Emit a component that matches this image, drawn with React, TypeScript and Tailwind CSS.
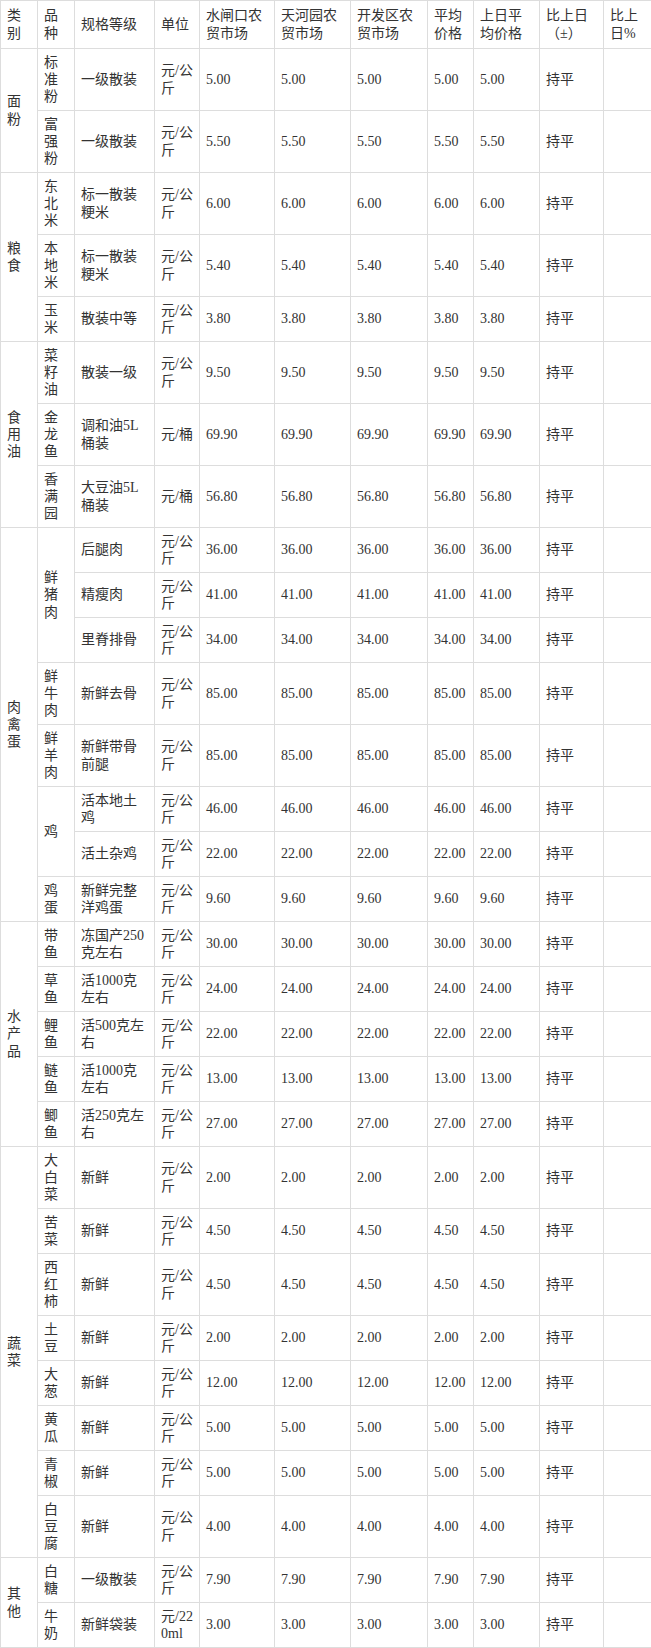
type Row = {
  cat?: [string, number];
  kind?: [string, number];
  spec: string;
  unit: string;
  price: string;
  tall?: boolean;
};

const rows: Row[] = [
  { cat: ["面粉", 2], kind: ["标准粉", 1], spec: "一级散装", unit: "元/公斤", price: "5.00", tall: true },
  { kind: ["富强粉", 1], spec: "一级散装", unit: "元/公斤", price: "5.50", tall: true },
  { cat: ["粮食", 3], kind: ["东北米", 1], spec: "标一散装粳米", unit: "元/公斤", price: "6.00", tall: true },
  { kind: ["本地米", 1], spec: "标一散装粳米", unit: "元/公斤", price: "5.40", tall: true },
  { kind: ["玉米", 1], spec: "散装中等", unit: "元/公斤", price: "3.80" },
  { cat: ["食用油", 3], kind: ["菜籽油", 1], spec: "散装一级", unit: "元/公斤", price: "9.50", tall: true },
  { kind: ["金龙鱼", 1], spec: "调和油5L桶装", unit: "元/桶", price: "69.90", tall: true },
  { kind: ["香满园", 1], spec: "大豆油5L桶装", unit: "元/桶", price: "56.80", tall: true },
  { cat: ["肉禽蛋", 8], kind: ["鲜猪肉", 3], spec: "后腿肉", unit: "元/公斤", price: "36.00" },
  { spec: "精瘦肉", unit: "元/公斤", price: "41.00" },
  { spec: "里脊排骨", unit: "元/公斤", price: "34.00" },
  { kind: ["鲜牛肉", 1], spec: "新鲜去骨", unit: "元/公斤", price: "85.00", tall: true },
  { kind: ["鲜羊肉", 1], spec: "新鲜带骨前腿", unit: "元/公斤", price: "85.00", tall: true },
  { kind: ["鸡", 2], spec: "活本地土鸡", unit: "元/公斤", price: "46.00" },
  { spec: "活土杂鸡", unit: "元/公斤", price: "22.00" },
  { kind: ["鸡蛋", 1], spec: "新鲜完整洋鸡蛋", unit: "元/公斤", price: "9.60" },
  { cat: ["水产品", 5], kind: ["带鱼", 1], spec: "冻国产250克左右", unit: "元/公斤", price: "30.00" },
  { kind: ["草鱼", 1], spec: "活1000克左右", unit: "元/公斤", price: "24.00" },
  { kind: ["鲤鱼", 1], spec: "活500克左右", unit: "元/公斤", price: "22.00" },
  { kind: ["鲢鱼", 1], spec: "活1000克左右", unit: "元/公斤", price: "13.00" },
  { kind: ["鲫鱼", 1], spec: "活250克左右", unit: "元/公斤", price: "27.00" },
  { cat: ["蔬菜", 8], kind: ["大白菜", 1], spec: "新鲜", unit: "元/公斤", price: "2.00", tall: true },
  { kind: ["苦菜", 1], spec: "新鲜", unit: "元/公斤", price: "4.50" },
  { kind: ["西红柿", 1], spec: "新鲜", unit: "元/公斤", price: "4.50", tall: true },
  { kind: ["土豆", 1], spec: "新鲜", unit: "元/公斤", price: "2.00" },
  { kind: ["大葱", 1], spec: "新鲜", unit: "元/公斤", price: "12.00" },
  { kind: ["黄瓜", 1], spec: "新鲜", unit: "元/公斤", price: "5.00" },
  { kind: ["青椒", 1], spec: "新鲜", unit: "元/公斤", price: "5.00" },
  { kind: ["白豆腐", 1], spec: "新鲜", unit: "元/公斤", price: "4.00", tall: true },
  { cat: ["其他", 2], kind: ["白糖", 1], spec: "一级散装", unit: "元/公斤", price: "7.90" },
  { kind: ["牛奶", 1], spec: "新鲜袋装", unit: "元/220ml", price: "3.00" },
];

const headers = [
  "类别",
  "品种",
  "规格等级",
  "单位",
  "水闸口农贸市场",
  "天河园农贸市场",
  "开发区农贸市场",
  "平均价格",
  "上日平均价格",
  "比上日（±）",
  "比上日%",
];

const widths = [37, 37, 80, 45, 75, 76, 77, 46, 66, 64, 48];

const cell = "border border-[#dddddd] px-[6px] py-0 align-middle text-left font-normal break-all";

export default function App() {
  return (
    <div className="bg-white text-[#333333] text-[14px] leading-[17.3px] [font-family:'Liberation_Serif','Noto_Sans_CJK_SC',serif]">
      <table className="w-[651px] table-fixed border-collapse">
        <colgroup>
          {widths.map((w, i) => (
            <col key={i} style={{ width: w }} />
          ))}
        </colgroup>
        <thead>
          <tr className="h-[48px]">
            {headers.map((h) => (
              <th key={h} className={cell}>
                {h}
              </th>
            ))}
          </tr>
        </thead>
        <tbody>
          {rows.map((r, i) => (
            <tr key={i} className={r.tall ? "h-[62px]" : "h-[45px]"}>
              {r.cat && (
                <td rowSpan={r.cat[1]} className={cell}>
                  {r.cat[0]}
                </td>
              )}
              {r.kind && (
                <td rowSpan={r.kind[1]} className={cell}>
                  {r.kind[0]}
                </td>
              )}
              <td className={cell}>{r.spec}</td>
              <td className={cell}>{r.unit}</td>
              <td className={cell}>{r.price}</td>
              <td className={cell}>{r.price}</td>
              <td className={cell}>{r.price}</td>
              <td className={cell}>{r.price}</td>
              <td className={cell}>{r.price}</td>
              <td className={cell}>持平</td>
              <td className={cell}></td>
            </tr>
          ))}
        </tbody>
      </table>
    </div>
  );
}
